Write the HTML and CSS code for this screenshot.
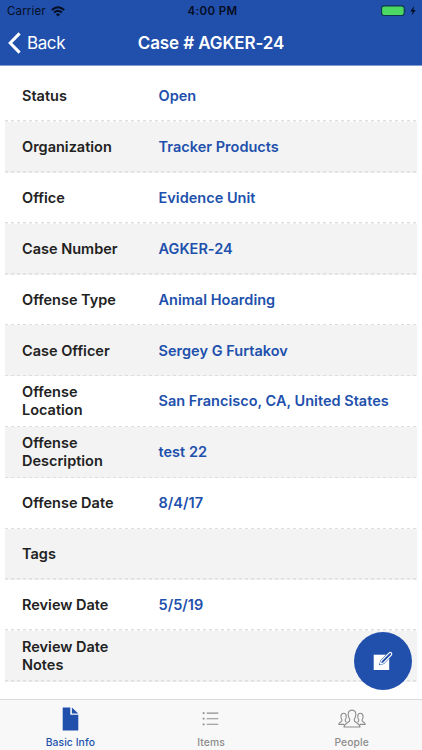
FILE: index.html
```
<!DOCTYPE html>
<html lang="en">
<head>
<meta charset="utf-8">
<title>Case # AGKER-24</title>
<link rel="stylesheet" href="styles.css">
</head>
<body>
<header class="header">
  <div class="status">
    <div class="carrier"><span>Carrier</span>
      <svg width="14" height="11" viewBox="0 0 14 11" fill="none" stroke="#050d22" stroke-width="2"><path d="M.8 4.1Q7-1.6 13.2 4.1M3.1 6.6Q7 3.1 10.9 6.6"/><path d="M4.8 8.3Q7 6.6 9.2 8.3L7 10.6Z" fill="#050d22" stroke="none"/></svg>
    </div>
    <div class="time">4:00 PM</div>
    <div class="battery">
      <svg width="36" height="12" viewBox="0 0 36 12"><rect x=".6" y=".9" width="22.6" height="9.6" rx="2.4" fill="#4bd964" stroke="#10364f" stroke-width="1.1"/><path d="M24.6 4.3q1.3 1.5 0 3z" fill="#10364f"/><path d="M33 .9L29.4 6.4H31.7L30.7 10.6L34.7 4.9H32.3Z" fill="#050d22"/></svg>
    </div>
  </div>
  <div class="nav">
    <div class="back">
      <svg width="13" height="22" viewBox="0 0 13 22" fill="none" stroke="#fff" stroke-width="3"><path d="M11.6 1.4L2.2 11L11.6 20.6"/></svg>
      <span>Back</span>
    </div>
    <h1 class="title">Case # AGKER-24</h1>
  </div>
</header>
<main class="list">
  <div class="row"><div class="label">Status</div><div class="value">Open</div></div>
  <div class="row"><div class="label">Organization</div><div class="value">Tracker Products</div></div>
  <div class="row"><div class="label">Office</div><div class="value">Evidence Unit</div></div>
  <div class="row"><div class="label">Case Number</div><div class="value">AGKER-24</div></div>
  <div class="row"><div class="label">Offense Type</div><div class="value">Animal Hoarding</div></div>
  <div class="row"><div class="label">Case Officer</div><div class="value">Sergey G Furtakov</div></div>
  <div class="row"><div class="label">Offense<br>Location</div><div class="value">San Francisco, CA, United States</div></div>
  <div class="row"><div class="label">Offense<br>Description</div><div class="value">test 22</div></div>
  <div class="row"><div class="label">Offense Date</div><div class="value">8/4/17</div></div>
  <div class="row"><div class="label">Tags</div><div class="value"></div></div>
  <div class="row"><div class="label">Review Date</div><div class="value">5/5/19</div></div>
  <div class="row"><div class="label">Review Date<br>Notes</div><div class="value"></div></div>
</main>
<div class="fab">
  <svg width="22" height="20" viewBox="0 0 22 20"><path d="M1.7 3.7H17.2V19H1.7Z" fill="#fff"/><path d="M8.4 12.9L9.3 9.8L17.2 1.9Q18.3 .9 19.3 1.9Q20.3 3 19.3 4.1L11.5 12Z" fill="#2150ac" stroke="#2150ac" stroke-width="2"/><path d="M8.4 12.9L9.3 9.8L17.2 1.9Q18.3 .9 19.3 1.9Q20.3 3 19.3 4.1L11.5 12Z" fill="#2150ac" stroke="#fff" stroke-width="1.2" stroke-linejoin="round"/></svg>
</div>
<nav class="tabs">
  <div class="tab active">
    <svg width="17" height="24" viewBox="0 0 17 24" fill="#2150ac"><path d="M.7.4H8.3V7.8H16.3V23.5H.7Z"/><path d="M9.9.5L16.3 6.5H9.9Z"/></svg>
    <span>Basic Info</span>
  </div>
  <div class="tab">
    <svg width="17" height="24" viewBox="0 0 17 24" fill="none" stroke="#8c8c8c"><path d="M4.7 6.1H16.3M4.7 11.7H16.3M4.7 17.3H16.3" stroke-width="1.1"/><path d="M.7 6.1H2.5M.7 11.7H2.5M.7 17.3H2.5" stroke-width="1.8"/></svg>
    <span>Items</span>
  </div>
  <div class="tab">
    <svg width="28" height="24" viewBox="0 0 28 24" fill="none" stroke="#8c8c8c" stroke-width="1.1" stroke-linejoin="round"><path d="M14 3.1C10.9 3.1 10 5.4 10.2 8C10.4 10.2 11.5 11.5 11.8 12.8C12.2 16.5 6.4 15 6 20H22C21.6 15 15.8 16.5 16.2 12.8C16.5 11.5 17.6 10.2 17.8 8C18 5.4 17.1 3.1 14 3.1Z"/><path d="M8.5 15.1C7.2 14.6 7 13.9 7.2 12.9C8.8 11.2 8.9 6.2 5.6 6.2C2.3 6.2 2.4 11.2 4 12.9C4.5 15.6 1 14.2 .8 17.4H6.2M19.5 15.1C20.8 14.6 21 13.9 20.8 12.9C19.2 11.2 19.1 6.2 22.4 6.2C25.7 6.2 25.6 11.2 24 12.9C23.5 15.6 27 14.2 27.2 17.4H21.8"/></svg>
    <span>People</span>
  </div>
</nav>
</body>
</html>
```
FILE: styles.css
```
* { box-sizing: border-box; }
body {
  margin: 0;
  width: 422px;
  height: 750px;
  display: flex;
  flex-direction: column;
  overflow: hidden;
  position: relative;
  background: #fff;
  font-family: Inter, "Liberation Sans", sans-serif;
}
svg { display: block; flex: none; }
.header {
  height: 66px;
  flex: none;
  background: #2150ac;
  border-bottom: 1px solid #7f9bd0;
}
.status {
  height: 21px;
  padding: 1px 5px 0 7px;
  display: grid;
  grid-template-columns: 1fr auto 1fr;
  align-items: center;
  color: #050d22;
  font-size: 11.5px;
}
.carrier { display: flex; align-items: center; gap: 5px; letter-spacing: .15px; }
.time { font-weight: 600; letter-spacing: .35px; padding-left: 1px; }
.battery { display: flex; justify-content: flex-end; }
.nav {
  height: 44px;
  padding-left: 8px;
  display: grid;
  grid-template-columns: 1fr auto 1fr;
  align-items: center;
  color: #fff;
}
.back { display: flex; align-items: center; gap: 6px; font-size: 17px; letter-spacing: -.4px; }
.title { margin: 0 8px 0 0; font-size: 17px; font-weight: 600; letter-spacing: -.1px; }
.list { flex: 1; padding: 5px 5px 0; }
.row {
  height: 50.9px;
  display: grid;
  grid-template-columns: 136.5px 1fr;
  align-items: center;
  padding: 0 0 .6px 17px;
  background: repeating-linear-gradient(90deg, #dedede 0 3px, transparent 3px 6px) 0 100% / 100% 1.5px no-repeat;
  font-size: 14.5px;
  line-height: 18px;
  font-weight: 600;
}
.row:nth-child(even) { background-color: #f3f3f3; }
.label { color: #222; }
.value { color: #2150ac; letter-spacing: .02px; }
.fab {
  position: absolute;
  left: 354px;
  top: 632px;
  width: 58px;
  height: 58px;
  border-radius: 50%;
  background: #2150ac;
  display: flex;
  align-items: center;
  justify-content: center;
}
.tabs {
  height: 51px;
  flex: none;
  display: grid;
  grid-template-columns: repeat(3, 1fr);
  background: #f8f8f8;
  border-top: 1px solid #dcdcdc;
}
.tab {
  display: flex;
  flex-direction: column;
  align-items: center;
  padding-top: 7px;
  gap: 4px;
  color: #8c8c8c;
  font-size: 10.3px;
  line-height: 14px;
  font-weight: 500;
  letter-spacing: .1px;
}
.active { color: #2150ac; }
```
